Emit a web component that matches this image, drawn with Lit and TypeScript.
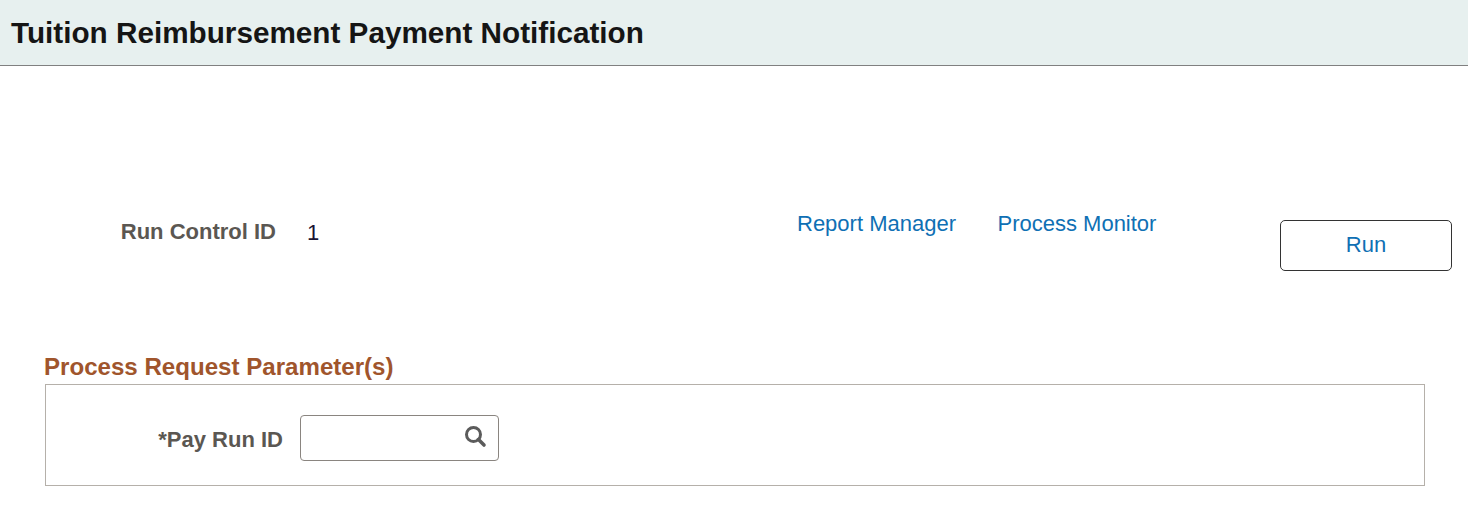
import { LitElement, html, css } from "lit";
import { customElement } from "lit/decorators.js";

@customElement("app-root")
export class AppRoot extends LitElement {
  static styles = css`
    :host { display: block; width: 1468px; height: 518px; background: #fff; overflow: hidden;
      font-family: "Liberation Sans", Arial, sans-serif; }
    .header { height: 65px; background: #e7f0ef; border-bottom: 1px solid #808080; display: flex; align-items: center; padding-left: 11px; }
    h1 { margin: 0; font-size: 29.7px; font-weight: 700; color: #151515; line-height: 32px; }
    .top { display: flex; align-items: flex-start; padding-top: 154px; height: 90px; }
    .label { font-size: 22px; font-weight: 700; color: #5b5752; line-height: 24px; }
    .rc { width: 276px; text-align: right; }
    .value { margin: 1px 0 0 31px; font-size: 22px; color: #1a1433; line-height: 24px; width: 490px; }
    a { color: #0f70b4; font-size: 22px; line-height: 24px; text-decoration: none; }
    .links { display: flex; gap: 41.5px; margin-top: -8px; width: 483px; }
    .run { width: 172px; height: 51px; box-sizing: border-box; border: 1px solid #333; border-radius: 5px; background: #fff;
      color: #0f70b4; font: 22px "Liberation Sans", Arial, sans-serif; padding: 0 0 2px; }
    .section { padding: 44px 0 0 44px; }
    h2 { margin: 0; font-size: 24.1px; font-weight: 700; color: #a0552c; line-height: 26px; }
    .box { width: 1380px; height: 102px; box-sizing: border-box; margin: 4px 0 0 1px; border: 1px solid #b5b0aa;
      display: flex; align-items: flex-start; padding-top: 30px; }
    .prl { width: 237px; text-align: right; margin-top: 13px; }
    .input { margin-left: 17px; width: 199px; height: 46px; box-sizing: border-box; border: 1px solid #8a8580; border-radius: 4px;
      display: flex; align-items: center; justify-content: flex-end; padding: 0 11px 4px 0; background: #fff; }
    svg { display: block; }
  `;
  render() {
    return html`
      <div class="header"><h1>Tuition Reimbursement Payment Notification</h1></div>
      <div class="top">
        <div class="label rc">Run Control ID</div>
        <div class="value">1</div>
        <div class="links"><a href="#">Report Manager</a><a href="#">Process Monitor</a></div>
        <button class="run">Run</button>
      </div>
      <div class="section">
        <h2>Process Request Parameter(s)</h2>
        <div class="box">
          <div class="label prl">*Pay Run ID</div>
          <div class="input">
            <svg width="23" height="23" viewBox="0 0 23 23" fill="none" stroke="#5b5b5b">
              <circle cx="9.5" cy="9.5" r="7" stroke-width="3"/>
              <path d="M14.5 14.5l5.5 5.5" stroke-width="3.6" stroke-linecap="round"/>
            </svg>
          </div>
        </div>
      </div>
    `;
  }
}
